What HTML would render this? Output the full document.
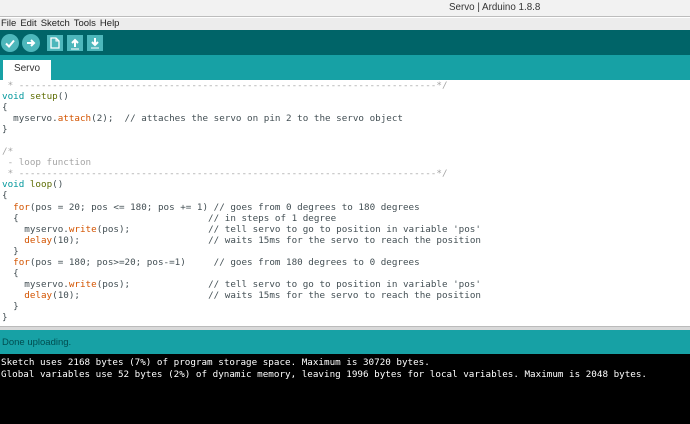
<!DOCTYPE html>
<html><head><meta charset="utf-8"><style>
*{margin:0;padding:0;box-sizing:border-box}
body{width:690px;height:424px;overflow:hidden;background:#fff;font-family:"Liberation Sans","DejaVu Sans",sans-serif;position:relative}
.title{position:absolute;left:0;top:0;width:690px;height:17px;background:#f2f2f2;border-bottom:1px solid #bdbdbd;font-size:9.8px;color:#333}
.title span{position:absolute;left:449px;top:2px}
.menu{position:absolute;left:0;top:18px;width:690px;height:12px;background:#ececec;font-size:9.5px;color:#222;line-height:12px;padding-left:1px}
.menu span{margin-right:4px}
.tb{position:absolute;left:0;top:30px;width:690px;height:25px;background:#006468}
.c{position:absolute;top:4px;width:18px;height:18px;border-radius:50%;background:#4db7bb}
.s{position:absolute;top:5px;width:16px;height:16px;background:#4db7bb}
.tabs{position:absolute;left:0;top:55px;width:690px;height:25px;background:#17a1a5}
.tab{position:absolute;left:3px;top:5px;width:48px;height:20px;background:#fff;font-size:10px;color:#333;text-align:center;line-height:17px}
.code{position:absolute;left:2px;top:80px;font-family:"DejaVu Sans Mono","Liberation Mono",monospace;font-size:9.25px;line-height:11.05px;color:#434f54;white-space:pre}
.k{color:#00979c}.f{color:#5e6d03}.o{color:#d35400}.g{color:#a5a5a5}
.sep{position:absolute;left:0;top:326px;width:690px;height:4px;background:#d9d9d9;border-top:1px solid #bbb}
.status{position:absolute;left:0;top:330px;width:690px;height:24px;background:#17a1a5;color:#004d50;font-size:9.5px;line-height:26px;padding-left:2px}
.con{position:absolute;left:0;top:354px;width:690px;height:70px;background:#000;color:#fff;font-family:"DejaVu Sans Mono","Liberation Mono",monospace;font-size:9.25px;line-height:12px;white-space:pre;padding:3px 0 0 1px}
</style></head><body>
<div class="title"><span>Servo | Arduino 1.8.8</span></div>
<div class="menu"><span>File</span><span>Edit</span><span>Sketch</span><span>Tools</span><span>Help</span></div>
<div class="tb">
<div class="c" style="left:1px"><svg width="18" height="18"><path d="M5 9.5l3 3 5-6" stroke="#fff" stroke-width="2" fill="none"/></svg></div>
<div class="c" style="left:22px"><svg width="18" height="18"><path d="M5 9h7M9 6l3 3-3 3" stroke="#fff" stroke-width="2" fill="none"/></svg></div>
<div class="s" style="left:47px"><svg width="16" height="16"><path d="M4 3h5l3 3v7H4z" stroke="#fff" stroke-width="1.3" fill="none"/><path d="M9 3v3h3" stroke="#fff" fill="none"/></svg></div>
<div class="s" style="left:67px"><svg width="16" height="16"><path d="M8 12V5M5 8l3-3 3 3" stroke="#fff" stroke-width="2" fill="none"/><path d="M4 14h8" stroke="#fff"/></svg></div>
<div class="s" style="left:87px"><svg width="16" height="16"><path d="M8 3v7M5 7l3 3 3-3" stroke="#fff" stroke-width="2" fill="none"/><path d="M4 13h8" stroke="#fff"/></svg></div>
</div>
<div class="tabs"><div class="tab">Servo</div></div>
<div class="code"><span class="g"> * ---------------------------------------------------------------------------*/</span>
<span class="k">void</span> <span class="f">setup</span>()
{
  myservo.<span class="o">attach</span>(2);  // attaches the servo on pin 2 to the servo object
}

<span class="g">/*
 - loop function
 * ---------------------------------------------------------------------------*/</span>
<span class="k">void</span> <span class="f">loop</span>()
{
  <span class="o">for</span>(pos = 20; pos &lt;= 180; pos += 1) // goes from 0 degrees to 180 degrees
  {                                  // in steps of 1 degree
    myservo.<span class="o">write</span>(pos);              // tell servo to go to position in variable 'pos'
    <span class="o">delay</span>(10);                       // waits 15ms for the servo to reach the position
  }
  <span class="o">for</span>(pos = 180; pos&gt;=20; pos-=1)     // goes from 180 degrees to 0 degrees
  {
    myservo.<span class="o">write</span>(pos);              // tell servo to go to position in variable 'pos'
    <span class="o">delay</span>(10);                       // waits 15ms for the servo to reach the position
  }
}</div>
<div class="sep"></div>
<div class="status">Done uploading.</div>
<div class="con">Sketch uses 2168 bytes (7%) of program storage space. Maximum is 30720 bytes.
Global variables use 52 bytes (2%) of dynamic memory, leaving 1996 bytes for local variables. Maximum is 2048 bytes.</div>
</body></html>
